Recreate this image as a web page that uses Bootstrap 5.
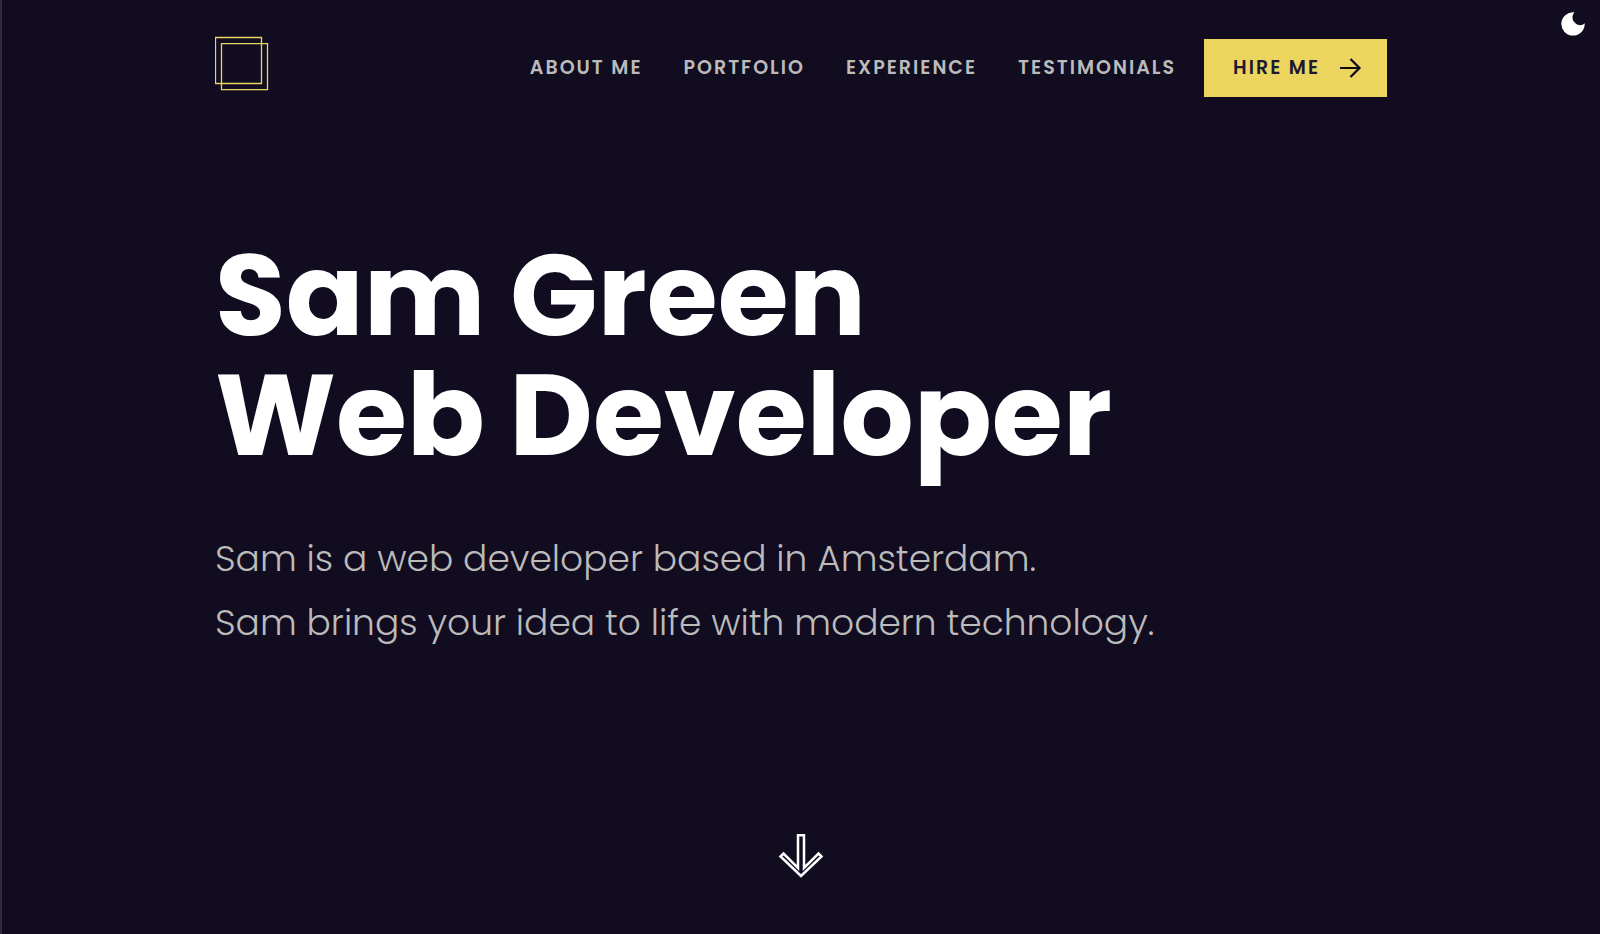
<!DOCTYPE html>
<html lang="en">
<head>
<meta charset="utf-8">
<meta name="viewport" content="width=device-width, initial-scale=1">
<title>Sam Green – Web Developer</title>
<link href="https://cdn.jsdelivr.net/npm/bootstrap@5.3.0/dist/css/bootstrap.min.css" rel="stylesheet">
<style>
  body { background: #110c20; color: #bbb; font-family: Poppins, Inter, "Open Sans", sans-serif; border-left: 2px solid #302c3d; }
  .page-wrap { max-width: 1172px; }
  .site-header { padding-top: 36px; }
  .main-menu { gap: 41px; }
  .main-menu a, .hire-btn { font-size: 19px; line-height: 26px; font-weight: 600; letter-spacing: 2px; }
  .main-menu a { color: #bbb; }
  .menu-row { padding-top: 3px; }
  .hire-btn { --bs-btn-color: #1c1830; --bs-btn-bg: #ebd55f; --bs-btn-border-color: #ebd55f; --bs-btn-hover-bg: #f3e07a; --bs-btn-hover-color: #1c1830; padding: 15px 24px 15px 28px; margin-left: 28px; gap: 20px; }
  .hero-title { color: #fff; font-size: 115px; line-height: 120px; font-weight: 700; margin-bottom: 52px; }
  .hero-text { font-size: 36px; line-height: 64px; font-weight: 300; }
  .hero { padding-top: 138px; }
  .scroll-link { padding-bottom: 56px; }
  .theme-btn { top: 12px; right: 15px; }
</style>
</head>
<body class="min-vh-100 d-flex flex-column position-relative">
<button type="button" class="theme-btn btn p-0 border-0 position-absolute d-flex" aria-label="Toggle theme">
  <svg width="24" height="24" viewBox="0 0 24 24" fill="#fff"><path d="M13.500.300A11.700 11.700 0 1 0 23.700 11.200C21 14 16.500 13.800 13.400 10.300C10.700 7.500 11 3.200 13.500.300Z"/></svg>
</button>
<header class="site-header page-wrap w-100 mx-auto d-flex justify-content-between align-items-start">
  <a href="#" aria-label="Home" class="d-flex">
    <svg width="54" height="56" viewBox="0 0 54 56" fill="none" stroke="#ebd55f" stroke-width="1.300"><path d="M.500 1.500H46.500V47.500H.500ZM6.500 7.700H52.500V53.700H6.500Z"/></svg>
  </a>
  <div class="menu-row d-flex align-items-center">
    <nav class="main-menu d-flex" aria-label="Main">
      <a href="#about" class="text-decoration-none">ABOUT ME</a>
      <a href="#portfolio" class="text-decoration-none">PORTFOLIO</a>
      <a href="#experience" class="text-decoration-none">EXPERIENCE</a>
      <a href="#testimonials" class="text-decoration-none">TESTIMONIALS</a>
    </nav>
    <button type="button" class="hire-btn btn rounded-0 d-flex align-items-center">HIRE ME
      <svg width="22" height="20" viewBox="0 0 22 20" fill="none" stroke="#110c10" stroke-width="2.200"><path d="M0 10H20M10.500 1L19.500 10L10.500 19"/></svg>
    </button>
  </div>
</header>
<main class="hero page-wrap w-100 mx-auto flex-grow-1">
  <h1 class="hero-title">Sam Green<br>Web Developer</h1>
  <p class="hero-text mb-0">Sam is a web developer based in Amsterdam.<br>Sam brings your idea to life with modern technology.</p>
</main>
<a href="#about" class="scroll-link d-flex justify-content-center" aria-label="Scroll down">
  <svg width="46" height="46" viewBox="0 0 46 46" fill="none" stroke="#fff" stroke-width="2.500"><path d="M20 3.200H26V36L40.500 21.500L43.500 24.500L23 44L2.500 24.500L5.500 21.500L20 36Z"/></svg>
</a>
<script src="https://cdn.jsdelivr.net/npm/bootstrap@5.3.0/dist/js/bootstrap.bundle.min.js"></script>
</body>
</html>
